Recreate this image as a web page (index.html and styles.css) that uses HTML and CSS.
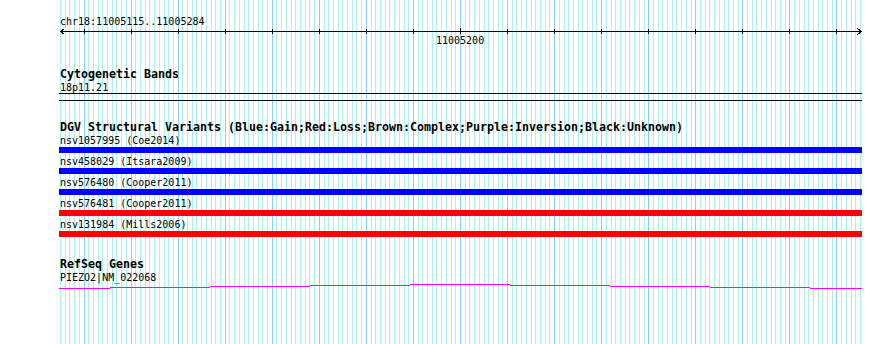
FILE: index.html
```html
<!DOCTYPE html>
<html>
<head>
<meta charset="utf-8">
<title>chr18:11005115..11005284</title>
<link rel="stylesheet" href="styles.css">
</head>
<body>
<div class="panel">
  <svg class="grid" id="grid" width="890" height="344" shape-rendering="crispEdges"></svg>
  <div class="tracks">
    <section class="track track-ruler">
      <div class="txt">chr18:11005115..11005284</div>
      <svg class="ruler" width="890" height="6" shape-rendering="crispEdges">
        <rect x="60" y="3" width="802" height="1" fill="#000"/>
        <polyline points="64.5,0.5 60.5,3.5 64.5,6.5" fill="none" stroke="#000" stroke-width="1"/>
        <polyline points="857.5,0.5 861.5,3.5 857.5,6.5" fill="none" stroke="#000" stroke-width="1"/>
        <g fill="#000">
          <rect x="84" y="1" width="1" height="5"/>
          <rect x="131" y="1" width="1" height="5"/>
          <rect x="178" y="1" width="1" height="5"/>
          <rect x="225" y="1" width="1" height="5"/>
          <rect x="272" y="1" width="1" height="5"/>
          <rect x="319" y="1" width="1" height="5"/>
          <rect x="366" y="1" width="1" height="5"/>
          <rect x="413" y="1" width="1" height="5"/>
          <rect x="460" y="0" width="1" height="6"/>
          <rect x="507" y="1" width="1" height="5"/>
          <rect x="554" y="1" width="1" height="5"/>
          <rect x="601" y="1" width="1" height="5"/>
          <rect x="648" y="1" width="1" height="5"/>
          <rect x="695" y="1" width="1" height="5"/>
          <rect x="742" y="1" width="1" height="5"/>
          <rect x="789" y="1" width="1" height="5"/>
          <rect x="836" y="1" width="1" height="5"/>
        </g>
      </svg>
      <div class="txt scale-label">11005200</div>
    </section>

    <section class="track track-cyto">
      <div class="title">Cytogenetic Bands</div>
      <div class="txt">18p11.21</div>
      <div class="band"></div>
    </section>

    <section class="track track-dgv">
      <div class="title">DGV Structural Variants (Blue:Gain;Red:Loss;Brown:Complex;Purple:Inversion;Black:Unknown)</div>
      <div class="feature">
        <div class="txt">nsv1057995 (Coe2014)</div>
        <div class="bar gain"></div>
      </div>
      <div class="feature">
        <div class="txt">nsv458029 (Itsara2009)</div>
        <div class="bar gain"></div>
      </div>
      <div class="feature">
        <div class="txt">nsv576480 (Cooper2011)</div>
        <div class="bar gain"></div>
      </div>
      <div class="feature">
        <div class="txt">nsv576481 (Cooper2011)</div>
        <div class="bar loss"></div>
      </div>
      <div class="feature">
        <div class="txt">nsv131984 (Mills2006)</div>
        <div class="bar loss"></div>
      </div>
    </section>

    <section class="track track-refseq">
      <div class="title">RefSeq Genes</div>
      <div class="txt">PIEZO2|NM_022068</div>
      <svg class="gene" width="890" height="5" shape-rendering="crispEdges">
        <g fill="#ff00ff">
          <rect x="59" y="4" width="51" height="1"/>
          <rect x="110" y="3" width="100" height="1"/>
          <rect x="210" y="2" width="100" height="1"/>
          <rect x="310" y="1" width="100" height="1"/>
          <rect x="410" y="0" width="100" height="1"/>
          <rect x="510" y="1" width="100" height="1"/>
          <rect x="610" y="2" width="100" height="1"/>
          <rect x="710" y="3" width="100" height="1"/>
          <rect x="810" y="4" width="52" height="1"/>
        </g>
      </svg>
    </section>
  </div>
</div>
<script src="grid.js"></script>
</body>
</html>
```

FILE: styles.css
```css
html, body {
  margin: 0;
  padding: 0;
  background: #ffffff;
}

.panel {
  position: relative;
  width: 890px;
  height: 344px;
  overflow: hidden;
  font-family: "DejaVu Sans Mono", "Liberation Mono", monospace;
  color: #000000;
}

.grid {
  position: absolute;
  left: 0;
  top: 0;
}

.grid .minor {
  stroke: #afeeee;
  stroke-width: 1;
}

.grid .major {
  stroke: #87cefa;
  stroke-width: 1;
}

.tracks {
  position: relative;
  padding-top: 15px;
}

.txt {
  font-size: 10px;
  line-height: 13px;
  height: 13px;
  padding-left: 60px;
  white-space: nowrap;
}

.title {
  font-size: 11.63px;
  font-weight: bold;
  line-height: 13px;
  height: 13px;
  padding-left: 60px;
  white-space: nowrap;
}

.ruler,
.gene {
  display: block;
  overflow: visible;
}

.scale-label {
  padding-left: 436px;
}

.track-cyto {
  margin-top: 21px;
}

.band {
  margin: -1px 0 0 59px;
  width: 803px;
  height: 6px;
  border-top: 1px solid #000000;
  border-bottom: 1px solid #000000;
}

.track-dgv {
  margin-top: 20px;
}

.feature {
  padding-bottom: 2px;
}

.bar {
  margin-left: 59px;
  width: 803px;
  height: 6px;
}

.gain {
  background: #0000ff;
}

.loss {
  background: #ff0000;
}

.track-refseq {
  margin-top: 19px;
}
```

FILE: grid.js
```js
(function () {
  var svg = document.getElementById('grid');
  var ns = 'http://www.w3.org/2000/svg';
  var x0 = 60;
  var step = 800 / 170;
  for (var i = 0; i <= 170; i++) {
    var x = Math.round(x0 + i * step) + 0.5;
    var l = document.createElementNS(ns, 'line');
    l.setAttribute('x1', x);
    l.setAttribute('x2', x);
    l.setAttribute('y1', 0);
    l.setAttribute('y2', 344);
    l.setAttribute('class', i % 10 === 5 ? 'major' : 'minor');
    svg.appendChild(l);
  }
})();
```
